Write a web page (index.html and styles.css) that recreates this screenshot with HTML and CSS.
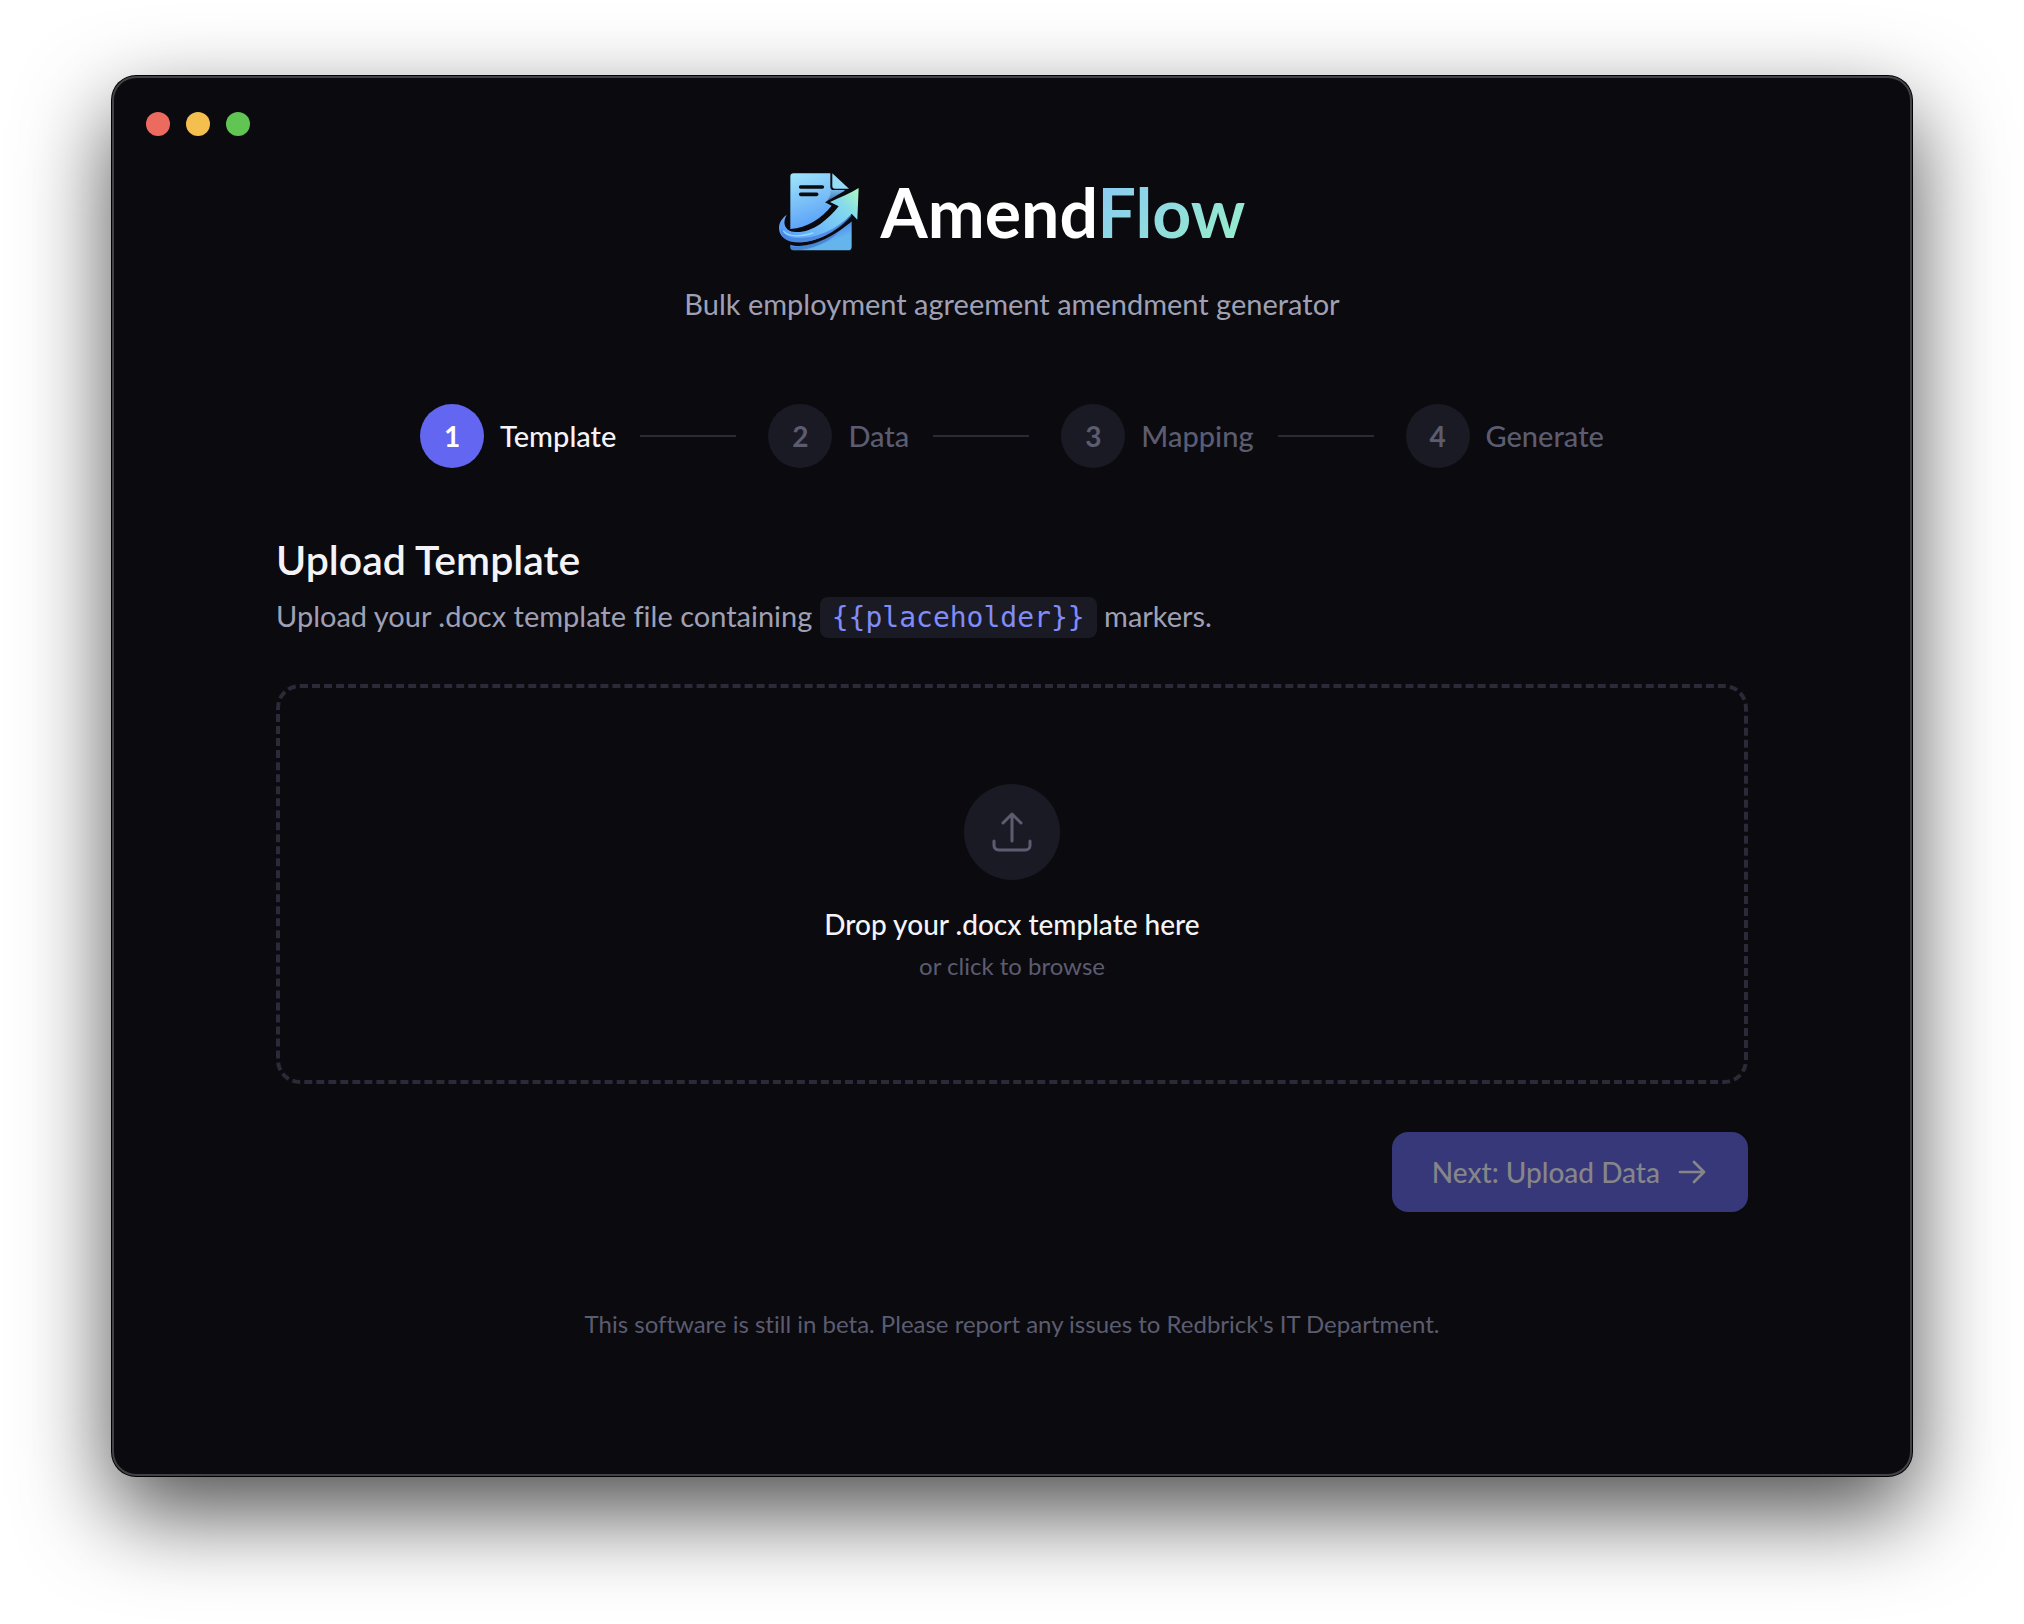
FILE: index.html
```html
<!DOCTYPE html>
<html lang="en">
<head>
    <meta charset="UTF-8">
    <meta name="viewport" content="width=device-width, initial-scale=1.0">
    <title>AmendFlow</title>
    <link rel="stylesheet" href="styles.css">
</head>
<body>
    <div class="window">
        <div class="titlebar">
            <button type="button" class="dot dot-close" aria-label="Close"></button>
            <button type="button" class="dot dot-minimize" aria-label="Minimize"></button>
            <button type="button" class="dot dot-zoom" aria-label="Zoom"></button>
        </div>

        <div class="container">
            <header class="header">
                <div class="brand">
                    <svg class="logo" viewBox="54 36 240 240" aria-hidden="true">
                        <defs>
                            <linearGradient id="page" x1="0" y1="0" x2="0.3" y2="1">
                                <stop offset="0" stop-color="#a0e6fa"/>
                                <stop offset="0.65" stop-color="#62a8f8"/>
                                <stop offset="0.85" stop-color="#4f8ff0"/>
                                <stop offset="1" stop-color="#64b4ee"/>
                            </linearGradient>
                            <linearGradient id="arrow" x1="0" y1="0.8" x2="1" y2="0.1">
                                <stop offset="0" stop-color="#5a9df8"/>
                                <stop offset="0.5" stop-color="#78c6f8"/>
                                <stop offset="0.78" stop-color="#86dcea"/>
                                <stop offset="1" stop-color="#a8f4c4"/>
                            </linearGradient>
                            <linearGradient id="shade" x1="0" y1="0" x2="0" y2="1">
                                <stop offset="0" stop-color="#0a0a0f" stop-opacity="0"/>
                                <stop offset="1" stop-color="#0a0a0f"/>
                            </linearGradient>
                        </defs>
                        <!-- page -->
                        <path fill="url(#page)" d="M98 40H208V80Q208 90 218 90H250L272 150V260Q272 271 261 271H98Q88 271 88 261V50Q88 40 98 40Z"/>
                        <path fill="url(#shade)" d="M208 86H256L272 150V180L228 130L198 124L208 106Z"/>
                        <path fill="#94dcf8" d="M214 40L264 86H222Q214 86 214 78Z"/>
                        <path stroke="#0a0a0f" stroke-width="11" stroke-linecap="round" d="M119 81H184M119 103H167"/>
                        <!-- gap around the arrow -->
                        <path fill="#0a0a0f" d="M293 84L250 93L192 127L212 137C180 176 140 203 88 207L60 214C68 250 88 259 112 258C176 258 230 218 273 184L289 180Z"/>
                        <path fill="#0a0a0f" d="M274 92L304 70V190L273 184L273 150Z"/>
                        <!-- arrow -->
                        <path fill="url(#arrow)" d="M293 84L289 179L272 161C236 208 176 246 112 247C76 247 54 229 54 204C54 188 64 173 77 165C66 184 68 203 86 212C110 222 146 214 178 192C200 176 218 158 233 139L207 126C238 112 268 100 293 84Z"/>
                        <path fill="#4680dc" d="M269 164C232 202 176 234 112 234C84 234 66 223 61 206C56 234 82 247 112 247C176 246 236 208 272 167Z" opacity="0.75"/>
                        <path fill="none" stroke="#8edcff" stroke-width="4" stroke-linecap="round" d="M68 214C84 232 124 230 156 219"/>
                        <path fill="#3366b8" opacity="0.5" d="M88 260C140 262 200 236 236 213C204 248 150 271 98 271Q88 271 88 260Z"/>
                    </svg>
                    <h1 class="brand-name">Amend<span class="brand-accent">Flow</span></h1>
                </div>
                <p class="tagline">Bulk employment agreement amendment generator</p>
            </header>

            <ol class="steps">
                <li class="step active"><span class="step-number">1</span>Template</li>
                <li class="step"><span class="step-number">2</span>Data</li>
                <li class="step"><span class="step-number">3</span>Mapping</li>
                <li class="step"><span class="step-number">4</span>Generate</li>
            </ol>

            <main>
                <h2 class="section-title">Upload Template</h2>
                <p class="section-text">Upload your .docx template file containing <code>{{placeholder}}</code> markers.</p>

                <label class="dropzone" for="templateFile">
                    <input type="file" id="templateFile" class="file-input" accept=".docx">
                    <span class="dropzone-icon">
                        <svg width="48" height="48" viewBox="0 0 24 24" fill="none" stroke="currentColor" stroke-width="1.5" stroke-linecap="round" stroke-linejoin="round" aria-hidden="true">
                            <path d="M3 16.5v2.25A2.25 2.25 0 0 0 5.25 21h13.5A2.25 2.25 0 0 0 21 18.75V16.5m-13.5-9L12 3m0 0l4.5 4.5M12 3v13.5"/>
                        </svg>
                    </span>
                    <span class="dropzone-title">Drop your .docx template here</span>
                    <span class="dropzone-hint">or click to browse</span>
                </label>

                <div class="actions">
                    <button type="button" class="btn" disabled>
                        Next: Upload Data
                        <svg width="32" height="32" viewBox="0 0 24 24" fill="none" stroke="currentColor" stroke-width="2" stroke-linecap="round" stroke-linejoin="round" aria-hidden="true">
                            <path d="M13.5 4.5L21 12m0 0l-7.5 7.5M21 12H3"/>
                        </svg>
                    </button>
                </div>
            </main>

            <footer class="footer">This software is still in beta. Please report any issues to Redbrick's IT Department.</footer>
        </div>
    </div>
</body>
</html>
```
FILE: styles.css
```css
* {
    box-sizing: border-box;
    margin: 0;
    padding: 0;
}

body {
    display: flex;
    min-height: 100vh;
    padding: 76px 112px 148px;
    background: #fff;
    color: #f4f4f8;
    font-family: Lato, "Liberation Sans", sans-serif;
    font-size: 28px;
    line-height: 40px;
    font-variant-ligatures: none;
}

.window {
    flex: 1;
    background: #0a0a0f;
    border-radius: 24px;
    box-shadow:
        inset 0 0 0 2px #424246,
        0 0 0 1px #000,
        0 36px 90px rgba(0, 0, 0, 0.7);
}

.titlebar {
    display: flex;
    gap: 16px;
    padding: 36px 34px;
}

.dot {
    width: 24px;
    height: 24px;
    border: 0;
    border-radius: 50%;
}

.dot-close { background: #ed6a5e; }
.dot-minimize { background: #f5bf4f; }
.dot-zoom { background: #61c554; }

.container {
    max-width: 1600px;
    margin: 0 auto;
    padding: 0 64px 64px;
}

/* Header */
.header {
    margin-bottom: 80px;
    text-align: center;
}

.brand {
    display: flex;
    align-items: center;
    justify-content: center;
    gap: 22px;
    margin-bottom: 32px;
}

.logo {
    width: 80px;
    height: 80px;
}

.brand-name {
    color: #fff;
    font-size: 68px;
    font-weight: 700;
    line-height: 80px;
}

.brand-accent {
    background: linear-gradient(135deg, #89c8f5, #98f0c8);
    -webkit-background-clip: text;
    background-clip: text;
    color: transparent;
}

.tagline {
    color: #a0a0b4;
    font-size: 29px;
}

/* Steps */
.steps {
    display: flex;
    justify-content: center;
    margin-bottom: 64px;
    font-size: 29px;
    list-style: none;
}

.step {
    display: flex;
    align-items: center;
    gap: 16px;
    color: #5c5c70;
    font-weight: 500;
}

/* connector line between two steps */
.step:not(:last-child)::after {
    content: "";
    width: 96px;
    height: 2px;
    margin: 0 32px 0 8px;
    background: #2a2a38;
}

.step-number {
    display: flex;
    align-items: center;
    justify-content: center;
    width: 64px;
    height: 64px;
    border-radius: 50%;
    background: #1a1a24;
    font-size: 28px;
    font-weight: 700;
}

.step.active {
    color: #f4f4f8;
}

.step.active .step-number {
    background: #6366f1;
    color: #fff;
}

/* Template section */
.section-title {
    margin-bottom: 8px;
    font-size: 41px;
    font-weight: 600;
    line-height: 56px;
}

.section-text {
    margin-bottom: 48px;
    color: #a0a0b4;
    font-size: 29px;
}

code {
    padding: 4px 12px;
    border-radius: 8px;
    background: #1a1a24;
    color: #818cf8;
    font-family: "DejaVu Sans Mono", monospace;
    font-size: 28px;
    line-height: 1;
}

.dropzone {
    display: flex;
    flex-direction: column;
    align-items: center;
    padding: 96px;
    border: 4px dashed #2a2a38;
    border-radius: 24px;
    cursor: pointer;
}

.file-input {
    position: absolute;
    width: 1px;
    height: 1px;
    opacity: 0;
}

.dropzone-icon {
    display: flex;
    align-items: center;
    justify-content: center;
    width: 96px;
    height: 96px;
    margin-bottom: 24px;
    border-radius: 50%;
    background: #1a1a24;
    color: #5c5c70;
}

.dropzone-title {
    margin-bottom: 4px;
    font-weight: 500;
}

.dropzone-hint {
    color: #5c5c70;
    font-size: 24px;
    line-height: 36px;
}

.actions {
    display: flex;
    justify-content: flex-end;
    margin-top: 48px;
}

.btn {
    display: flex;
    align-items: center;
    gap: 16px;
    height: 80px;
    padding: 0 40px;
    border: 0;
    border-radius: 16px;
    background: #6366f1;
    color: #fff;
    font: inherit;
    font-weight: 500;
}

.btn:disabled {
    background: #37387a;
    color: #868689;
}

.footer {
    margin-top: 96px;
    color: #5c5c70;
    font-size: 24px;
    line-height: 32px;
    text-align: center;
}
```
